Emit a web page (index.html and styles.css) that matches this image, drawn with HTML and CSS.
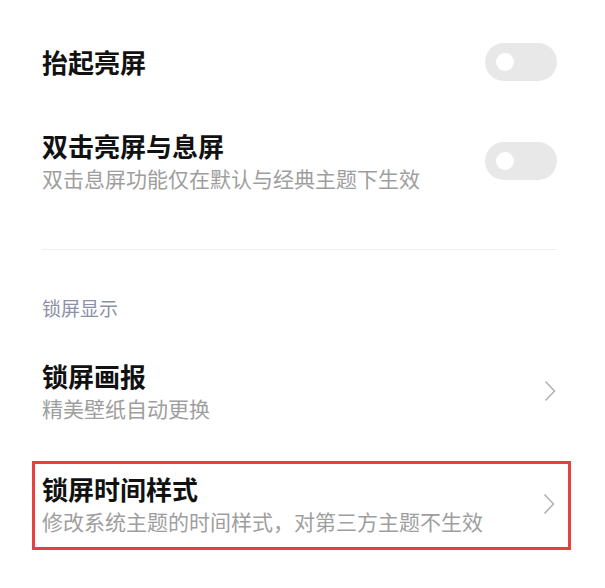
FILE: index.html
```html
<!DOCTYPE html>
<html lang="zh-CN">
<head>
<meta charset="UTF-8" />
<meta name="viewport" content="width=device-width, initial-scale=1" />
<title>锁屏设置</title>
<link rel="stylesheet" href="styles.css">
</head>
<body>

<div class="list">
  <div class="item">
    <div class="text">
      <div class="title">抬起亮屏</div>
    </div>
    <div class="switch"><span class="knob"></span></div>
  </div>

  <div class="item">
    <div class="text">
      <div class="title">双击亮屏与息屏</div>
      <div class="summary">双击息屏功能仅在默认与经典主题下生效</div>
    </div>
    <div class="switch"><span class="knob"></span></div>
  </div>

  <div class="divider"></div>

  <div class="group-title">锁屏显示</div>

  <div class="item">
    <div class="text">
      <div class="title">锁屏画报</div>
      <div class="summary">精美壁纸自动更换</div>
    </div>
    <svg class="arrow" width="12" height="22" viewBox="0 0 12 22">
      <polyline points="1.5,1.5 10.5,11 1.5,20.5" fill="none" stroke="#b3b3b3" stroke-width="1.6" />
    </svg>
  </div>

  <div class="item marked">
    <div class="text">
      <div class="title">锁屏时间样式</div>
      <div class="summary">修改系统主题的时间样式，对第三方主题不生效</div>
    </div>
    <svg class="arrow" width="12" height="22" viewBox="0 0 12 22">
      <polyline points="1.5,1.5 10.5,11 1.5,20.5" fill="none" stroke="#b3b3b3" stroke-width="1.6" />
    </svg>
  </div>
</div>

</body>
</html>
```

FILE: styles.css
```css
body {
  margin: 0;
  background-color: #fff;
  font-family: "Noto Sans CJK SC", "Noto Sans", sans-serif;
}
.list {
  padding: 19px 48px 0 42px;
}
.item {
  display: flex;
  align-items: center;
  justify-content: space-between;
  padding: 24px 0;
}
.title {
  font-size: 26px;
  line-height: 34px;
  font-weight: 700;
  color: #111;
}
.summary {
  font-size: 21px;
  line-height: 30px;
  color: #9e9e9e;
}
.switch {
  position: relative;
  width: 72px;
  height: 38px;
  border-radius: 19px;
  background-color: #e8e8e8;
  flex-shrink: 0;
}
.knob {
  position: absolute;
  left: 11px;
  top: 10px;
  width: 18px;
  height: 18px;
  border-radius: 50%;
  background-color: #fff;
}
.divider {
  height: 1px;
  margin-top: 32px;
  background-color: #eeeeee;
}
.group-title {
  padding: 45px 0 14px;
  font-size: 19px;
  line-height: 26px;
  color: #8b90a8;
}
.arrow {
  flex-shrink: 0;
  margin-right: 1px;
}
.marked {
  margin: 14px -14px 0 -10px;
  padding: 8px 12px 11px 7px;
  border: 3px solid #e8403f;
}
```
